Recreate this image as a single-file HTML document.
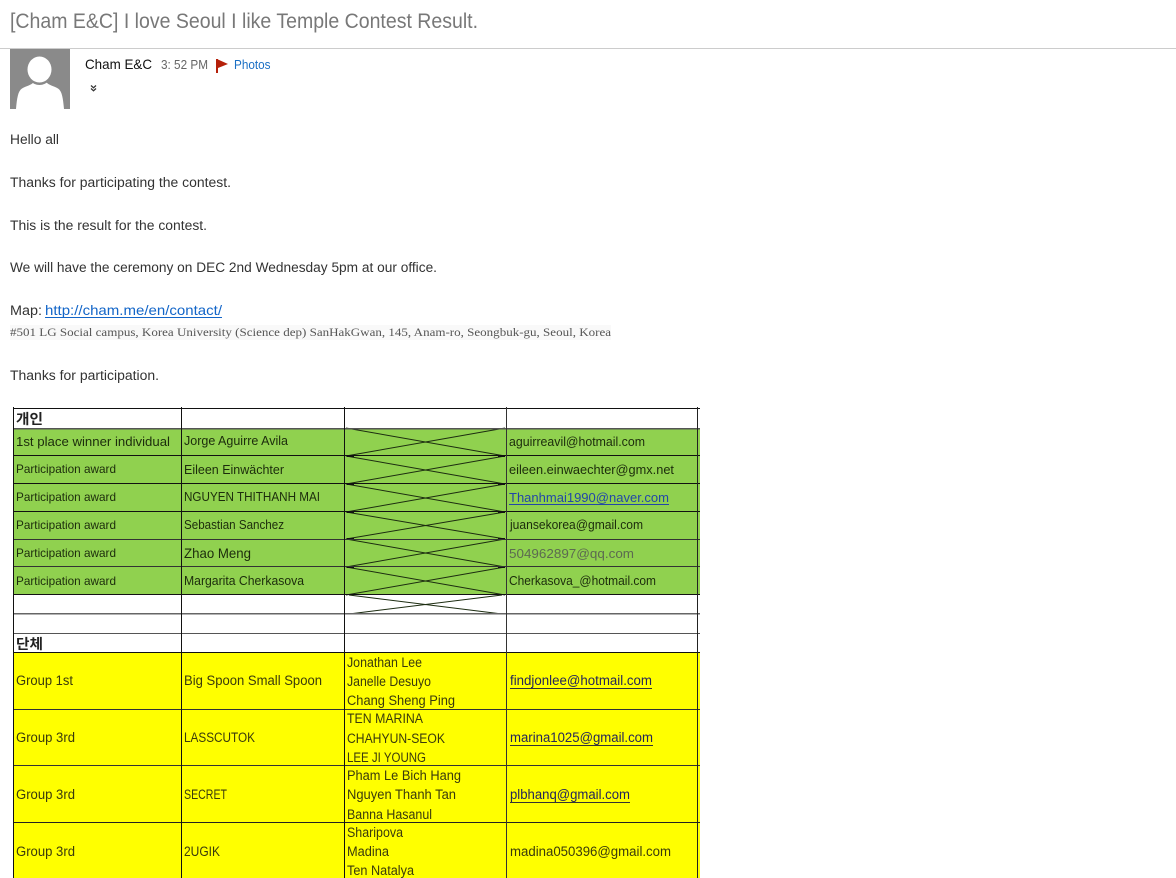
<!DOCTYPE html>
<html>
<head>
<meta charset="utf-8">
<style>
html,body{margin:0;padding:0;background:#fff;width:1176px;height:878px;overflow:hidden}
svg{display:block}
text{font-family:"Liberation Sans","Noto Sans CJK KR",sans-serif;white-space:pre}
.b{font-size:13.5px;fill:#333}
.t{font-size:13.5px;fill:#3a3a0c}
.g{font-size:13px;fill:#1c2c0c}
.p{font-size:12px;fill:#1c2c0c}
.m{fill:#25255a}
.soft{filter:blur(.3px)}
</style>
</head>
<body>
<svg width="1176" height="878" viewBox="0 0 1176 878" xmlns="http://www.w3.org/2000/svg">
<rect width="1176" height="878" fill="#fff"/>
<text x="10" y="28" font-size="21.500" fill="#787878" textLength="468" lengthAdjust="spacingAndGlyphs">[Cham E&amp;C] I love Seoul I like Temple Contest Result.</text>
<rect x="0" y="48" width="1176" height="1" fill="#cccccc"/>
<rect x="10" y="49" width="60" height="60" fill="#8a8a8a"/>
<path d="M16 109 C17 98 18 91 22 88.500 C26 86 31 85.500 34 82 L46 82 C49 85.500 54 86 58 88.500 C62 91 63 98 64 109 Z" fill="#fff"/>
<ellipse cx="39.500" cy="70" rx="13.500" ry="15" fill="#8a8a8a"/>
<ellipse cx="39.500" cy="69.500" rx="12" ry="13" fill="#fff"/>
<text x="85" y="69" font-size="14" fill="#111" textLength="67" lengthAdjust="spacingAndGlyphs">Cham E&amp;C</text>
<text x="161" y="69" font-size="12.500" fill="#666" textLength="47" lengthAdjust="spacingAndGlyphs">3: 52 PM</text>
<rect x="216" y="59" width="2" height="14" fill="#b5200a"/>
<path d="M218 59.500 L228 64 L218 68 Z" fill="#b5200a"/>
<text x="234" y="69" font-size="12.500" fill="#1a6fc4" textLength="36.500" lengthAdjust="spacingAndGlyphs">Photos</text>
<path d="M91 85.500 L93.500 87.800 L96 85.500 M91 88.500 L93.500 90.800 L96 88.500" fill="none" stroke="#333" stroke-width="1.300"/>

<text class="b" x="10" y="144" textLength="49" lengthAdjust="spacingAndGlyphs">Hello all</text>
<text class="b" x="10" y="187" textLength="221" lengthAdjust="spacingAndGlyphs">Thanks for participating the contest.</text>
<text class="b" x="10" y="230" textLength="197" lengthAdjust="spacingAndGlyphs">This is the result for the contest.</text>
<text class="b" x="10" y="272" textLength="427" lengthAdjust="spacingAndGlyphs">We will have the ceremony on DEC 2nd Wednesday 5pm at our office.</text>
<text class="b" x="10" y="315" textLength="32" lengthAdjust="spacingAndGlyphs">Map:</text>
<text x="45" y="315" font-size="14" fill="#1265c8" textLength="177" lengthAdjust="spacingAndGlyphs">http://cham.me/en/contact/</text>
<rect x="45" y="317" width="177" height="1" fill="#1265c8"/>
<rect x="10" y="325" width="601" height="15" fill="#f9f9f9"/>
<text x="10" y="336" font-size="12" fill="#555" style="font-family:'Liberation Serif',serif" textLength="601" lengthAdjust="spacingAndGlyphs">#501 LG Social campus, Korea University (Science dep) SanHakGwan, 145, Anam-ro, Seongbuk-gu, Seoul, Korea</text>
<text class="b" x="10" y="380" textLength="149" lengthAdjust="spacingAndGlyphs">Thanks for participation.</text>

<g class="soft">
<rect x="14" y="428" width="686" height="167" fill="#90d14f"/>
<rect x="14" y="653" width="686" height="225" fill="#ffff00"/>

<g stroke="#1c2c10" stroke-width="1" fill="none">
<path d="M346 428 L505 456 M346 456 L505 428"/>
<path d="M346 456 L505 484 M346 484 L505 456"/>
<path d="M346 484 L505 512 M346 512 L505 484"/>
<path d="M346 512 L505 539 M346 539 L505 512"/>
<path d="M346 539 L505 567 M346 567 L505 539"/>
<path d="M346 567 L505 595 M346 595 L505 567"/>
<path d="M349 595 L502 614 M349 614 L502 595"/>
</g>
<g fill="#111">
<rect x="347" y="455" width="7" height="2"/><rect x="498" y="455" width="7" height="2"/>
<rect x="347" y="483" width="7" height="2"/><rect x="498" y="483" width="7" height="2"/>
<rect x="347" y="511" width="7" height="2"/><rect x="498" y="511" width="7" height="2"/>
<rect x="347" y="538" width="7" height="2"/><rect x="498" y="538" width="7" height="2"/>
<rect x="347" y="566" width="7" height="2"/><rect x="498" y="566" width="7" height="2"/>
</g>

<g fill="#111">
<rect x="13" y="408" width="687" height="1"/>
<rect x="13" y="428" width="687" height="1.500" fill="#555"/>
<rect x="13" y="455" width="687" height="1"/>
<rect x="13" y="483" width="687" height="1"/>
<rect x="13" y="511" width="687" height="1"/>
<rect x="13" y="539" width="687" height="1" fill="#333"/>
<rect x="13" y="566" width="687" height="1" fill="#333"/>
<rect x="13" y="594" width="687" height="1"/>
<rect x="13" y="613" width="687" height="1.500" fill="#666"/>
<rect x="13" y="633" width="687" height="1" fill="#555"/>
<rect x="13" y="652" width="687" height="1"/>
<rect x="13" y="709" width="687" height="1" fill="#333"/>
<rect x="13" y="765" width="687" height="1" fill="#333"/>
<rect x="13" y="822" width="687" height="1" fill="#222"/>
<rect x="13" y="407" width="1" height="471"/>
<rect x="181" y="407" width="1" height="471"/>
<rect x="344" y="407" width="1" height="471"/>
<rect x="506" y="407" width="1" height="471" fill="#333"/>
<rect x="697" y="407" width="1" height="471" fill="#222"/>
</g>

<text x="16" y="424" font-size="14" font-weight="700" fill="#222" textLength="27" lengthAdjust="spacingAndGlyphs">개인</text>
<text class="g" x="16" y="446" textLength="154" lengthAdjust="spacingAndGlyphs">1st place winner individual</text>
<text class="g" x="184" y="445" textLength="104" lengthAdjust="spacingAndGlyphs">Jorge Aguirre Avila</text>
<text class="g" x="509" y="446" textLength="136" lengthAdjust="spacingAndGlyphs">aguirreavil@hotmail.com</text>

<text class="p" x="16" y="473" textLength="100" lengthAdjust="spacingAndGlyphs">Participation award</text>
<text class="g" x="184" y="474" textLength="100" lengthAdjust="spacingAndGlyphs">Eileen Einwächter</text>
<text class="g" x="509" y="474" textLength="165" lengthAdjust="spacingAndGlyphs">eileen.einwaechter@gmx.net</text>

<text class="p" x="16" y="501" textLength="100" lengthAdjust="spacingAndGlyphs">Participation award</text>
<text class="g" x="184" y="501" textLength="136" lengthAdjust="spacingAndGlyphs">NGUYEN THITHANH MAI</text>
<text x="509" y="502" font-size="13" fill="#2246a8" textLength="160" lengthAdjust="spacingAndGlyphs">Thanhmai1990@naver.com</text>
<rect x="509" y="504" width="160" height="1" fill="#2246a8"/>

<text class="p" x="16" y="529" textLength="100" lengthAdjust="spacingAndGlyphs">Participation award</text>
<text class="g" x="184" y="529" textLength="100" lengthAdjust="spacingAndGlyphs">Sebastian Sanchez</text>
<text class="g" x="510" y="529" textLength="133" lengthAdjust="spacingAndGlyphs">juansekorea@gmail.com</text>

<text class="p" x="16" y="557" textLength="100" lengthAdjust="spacingAndGlyphs">Participation award</text>
<text x="184" y="558" font-size="14" fill="#1c2c0c" textLength="67" lengthAdjust="spacingAndGlyphs">Zhao Meng</text>
<text x="509" y="558" font-size="13" fill="#5c6a50" textLength="125" lengthAdjust="spacingAndGlyphs">504962897@qq.com</text>

<text class="p" x="16" y="585" textLength="100" lengthAdjust="spacingAndGlyphs">Participation award</text>
<text class="g" x="184" y="585" textLength="120" lengthAdjust="spacingAndGlyphs">Margarita Cherkasova</text>
<text class="g" x="509" y="585" textLength="147" lengthAdjust="spacingAndGlyphs">Cherkasova_@hotmail.com</text>

<text x="16" y="649" font-size="14" font-weight="700" fill="#222" textLength="27" lengthAdjust="spacingAndGlyphs">단체</text>

<text class="t" x="16" y="685" textLength="57" lengthAdjust="spacingAndGlyphs">Group 1st</text>
<text class="t" x="184" y="685" textLength="138" lengthAdjust="spacingAndGlyphs">Big Spoon Small Spoon</text>
<text class="t" x="347" y="667" textLength="75" lengthAdjust="spacingAndGlyphs">Jonathan Lee</text>
<text class="t" x="347" y="686" textLength="84" lengthAdjust="spacingAndGlyphs">Janelle Desuyo</text>
<text class="t" x="347" y="705" textLength="108" lengthAdjust="spacingAndGlyphs">Chang Sheng Ping</text>
<text class="t m" x="510" y="685" textLength="142" lengthAdjust="spacingAndGlyphs">findjonlee@hotmail.com</text>
<rect x="510" y="688" width="142" height="1" fill="#333"/>

<text class="t" x="16" y="742" textLength="59" lengthAdjust="spacingAndGlyphs">Group 3rd</text>
<text class="t" x="184" y="742" textLength="71" lengthAdjust="spacingAndGlyphs">LASSCUTOK</text>
<text class="t" x="347" y="723" textLength="76" lengthAdjust="spacingAndGlyphs">TEN MARINA</text>
<text class="t" x="347" y="743" textLength="98" lengthAdjust="spacingAndGlyphs">CHAHYUN-SEOK</text>
<text class="t" x="347" y="762" textLength="79" lengthAdjust="spacingAndGlyphs">LEE JI YOUNG</text>
<text class="t m" x="510" y="742" textLength="143" lengthAdjust="spacingAndGlyphs">marina1025@gmail.com</text>
<rect x="510" y="745" width="143" height="1" fill="#333"/>

<text class="t" x="16" y="799" textLength="59" lengthAdjust="spacingAndGlyphs">Group 3rd</text>
<text class="t" x="184" y="799" textLength="43" lengthAdjust="spacingAndGlyphs">SECRET</text>
<text class="t" x="347" y="780" textLength="114" lengthAdjust="spacingAndGlyphs">Pham Le Bich Hang</text>
<text class="t" x="347" y="799" textLength="109" lengthAdjust="spacingAndGlyphs">Nguyen Thanh Tan</text>
<text class="t" x="347" y="819" textLength="85" lengthAdjust="spacingAndGlyphs">Banna Hasanul</text>
<text class="t m" x="510" y="799" textLength="120" lengthAdjust="spacingAndGlyphs">plbhanq@gmail.com</text>
<rect x="510" y="802" width="120" height="1" fill="#333"/>

<text class="t" x="16" y="856" textLength="59" lengthAdjust="spacingAndGlyphs">Group 3rd</text>
<text class="t" x="184" y="856" textLength="36" lengthAdjust="spacingAndGlyphs">2UGIK</text>
<text class="t" x="347" y="837" textLength="56" lengthAdjust="spacingAndGlyphs">Sharipova</text>
<text class="t" x="347" y="856" textLength="42" lengthAdjust="spacingAndGlyphs">Madina</text>
<text class="t" x="347" y="875" textLength="67" lengthAdjust="spacingAndGlyphs">Ten Natalya</text>
<text class="t" x="510" y="856" textLength="161" lengthAdjust="spacingAndGlyphs">madina050396@gmail.com</text>
</g>
</svg>
</body>
</html>
